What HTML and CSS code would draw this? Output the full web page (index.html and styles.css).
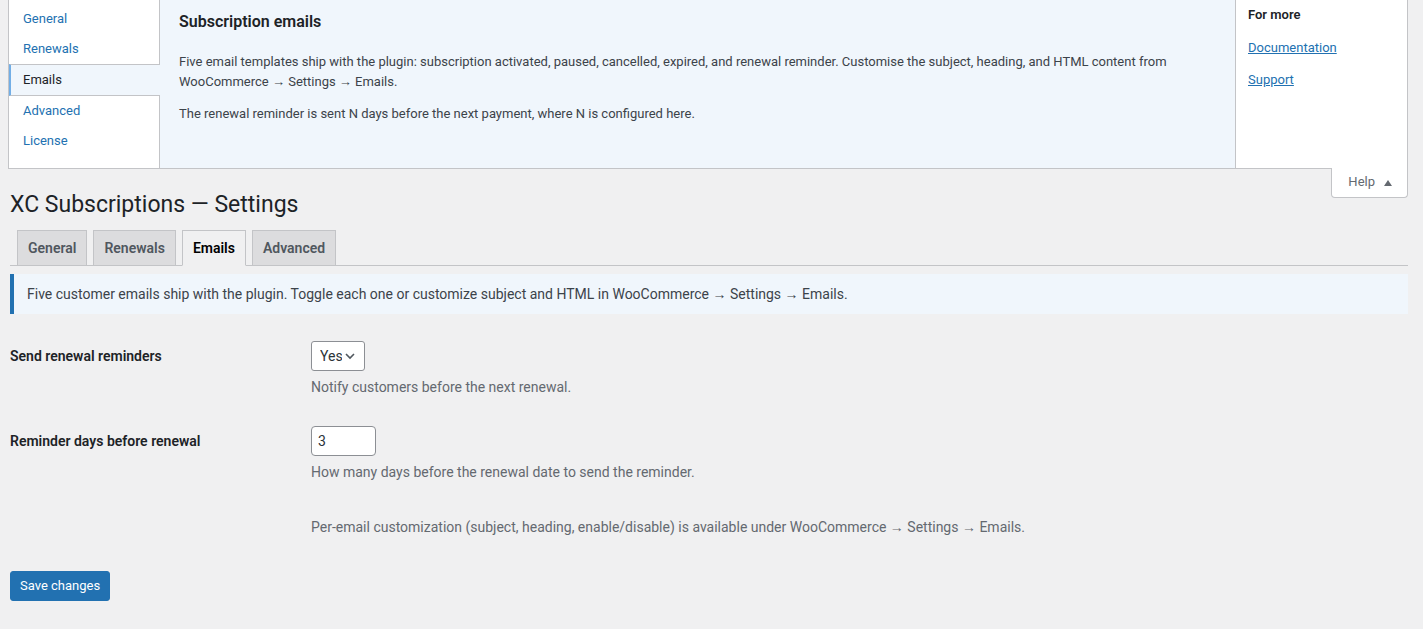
FILE: index.html
```html
<!DOCTYPE html>
<html lang="en">
<head>
  <meta charset="UTF-8">
  <meta name="viewport" content="width=device-width, initial-scale=1.0">
  <title>XC Subscriptions — Settings</title>
  <link rel="stylesheet" href="styles.css">
</head>
<body>
  <div id="screen-meta">
    <div class="help-panel">
      <ul class="help-tabs">
        <li><a href="#">General</a></li>
        <li><a href="#">Renewals</a></li>
        <li class="active"><a href="#">Emails</a></li>
        <li><a href="#">Advanced</a></li>
        <li><a href="#">License</a></li>
      </ul>
      <div class="help-content">
        <h2>Subscription emails</h2>
        <p>Five email templates ship with the plugin: subscription activated, paused, cancelled, expired, and renewal reminder. Customise the subject, heading, and HTML content from WooCommerce → Settings → Emails.</p>
        <p>The renewal reminder is sent N days before the next payment, where N is configured here.</p>
      </div>
      <div class="help-sidebar">
        <p><strong>For more</strong></p>
        <p><a href="#">Documentation</a></p>
        <p><a href="#">Support</a></p>
      </div>
    </div>
  </div>
  <div id="screen-meta-links">
    <button type="button" class="show-settings">Help
      <svg width="10" height="10" viewBox="0 0 10 10"><path d="M1 8 L5 2 L9 8 Z" fill="#646970"/></svg>
    </button>
  </div>

  <div class="wrap">
    <h1>XC Subscriptions — Settings</h1>

    <nav class="nav-tab-wrapper">
      <a href="#" class="nav-tab">General</a>
      <a href="#" class="nav-tab">Renewals</a>
      <a href="#" class="nav-tab nav-tab-active">Emails</a>
      <a href="#" class="nav-tab">Advanced</a>
    </nav>

    <div class="notice notice-info">
      <p>Five customer emails ship with the plugin. Toggle each one or customize subject and HTML in WooCommerce → Settings → Emails.</p>
    </div>

    <form>
      <table class="form-table">
        <tr>
          <th scope="row"><label for="send_reminders">Send renewal reminders</label></th>
          <td>
            <span class="select-wrap">
              <select id="send_reminders">
                <option>Yes</option>
                <option>No</option>
              </select>
              <svg class="chevron" width="12" height="12" viewBox="0 0 12 12"><path d="M2 4 L6 8 L10 4" fill="none" stroke="#50575e" stroke-width="1.6"/></svg>
            </span>
            <p class="description">Notify customers before the next renewal.</p>
          </td>
        </tr>
        <tr>
          <th scope="row"><label for="reminder_days">Reminder days before renewal</label></th>
          <td>
            <input type="text" id="reminder_days" class="small-text" value="3">
            <p class="description">How many days before the renewal date to send the reminder.</p>
          </td>
        </tr>
        <tr>
          <th scope="row"></th>
          <td>
            <p class="description">Per-email customization (subject, heading, enable/disable) is available under WooCommerce → Settings → Emails.</p>
          </td>
        </tr>
      </table>

      <p class="submit">
        <button type="submit" class="button-primary">Save changes</button>
      </p>
    </form>
  </div>
</body>
</html>
```

FILE: styles.css
```css
* {
  box-sizing: border-box;
}
body {
  margin: 0;
  background: #f0f0f1;
  color: #3c434a;
  font-family: Roboto, "Noto Sans", sans-serif;
  font-size: 13px;
  line-height: 1.5;
}
a {
  color: #2271b1;
}

/* help panel */
#screen-meta {
  margin: 0 15px 0 8px;
}
.help-panel {
  display: grid;
  grid-template-columns: 151px 1fr 172px;
  height: 169px;
  background: #fff;
  border: 1px solid #c3c4c7;
  border-top: none;
}
.help-tabs {
  list-style: none;
  margin: 0;
  padding: 5px 0 0;
  border-right: 1px solid #c3c4c7;
}
.help-tabs li a {
  display: block;
  padding: 6px 5px 6px 14px;
  line-height: 18px;
  text-decoration: none;
}
.help-tabs li:first-child a {
  padding-top: 5px;
}
.help-tabs li.active {
  margin-right: -1px;
  position: relative;
  background: #f0f6fc;
  border-left: 2px solid #72aee6;
  border-top: 1px solid #c3c4c7;
  border-bottom: 1px solid #c3c4c7;
}
.help-tabs li.active a {
  color: #1d2327;
  padding-left: 12px;
}
.help-content {
  background: #f0f6fc;
  padding: 11px 20px 0 19px;
}
.help-content h2 {
  margin: 0 0 19px;
  font-size: 16px;
  line-height: 22px;
  font-weight: 600;
  color: #1d2327;
}
.help-content p {
  margin: 0 0 13px;
  line-height: 19.5px;
}
.help-sidebar {
  border-left: 1px solid #c3c4c7;
  padding: 5px 12px 0;
}
.help-sidebar p {
  margin: 0 0 13px;
  line-height: 19.5px;
}
.help-sidebar strong {
  font-weight: 600;
  color: #1d2327;
}

#screen-meta-links {
  float: right;
  margin: -1px 15px 0 0;
  position: relative;
}
.show-settings {
  display: flex;
  align-items: center;
  gap: 8px;
  height: 30px;
  padding: 3px 14px 3px 16px;
  background: #fff;
  border: 1px solid #c3c4c7;
  border-top: none;
  border-radius: 0 0 4px 4px;
  color: #646970;
  font: inherit;
  line-height: 1.7;
}

/* page */
.wrap {
  margin: 10px 15px 0 10px;
}
.wrap h1 {
  margin: 0;
  padding: 11px 0 2px;
  font-size: 23px;
  font-weight: 400;
  line-height: 1.3;
  color: #1d2327;
}
.nav-tab-wrapper {
  display: flex;
  gap: 6px;
  padding: 8px 0 0 7px;
  border-bottom: 1px solid #c3c4c7;
}
.nav-tab {
  margin-bottom: -1px;
  padding: 5px 10px;
  background: #dcdcde;
  border: 1px solid #c3c4c7;
  color: #50575e;
  font-size: 14px;
  font-weight: 600;
  line-height: 24px;
  text-decoration: none;
}
.nav-tab-active {
  background: #f0f0f1;
  border-bottom-color: #f0f0f1;
  color: #000;
}

.notice {
  margin: 8px 0 12px;
  padding: 10px 12px 10px 13px;
  background: #f0f6fc;
  border-left: 4px solid #2271b1;
}
.notice p {
  margin: 0;
  font-size: 14px;
  line-height: 20px;
}

.form-table {
  border-collapse: collapse;
  width: 100%;
  font-size: 14px;
}
.form-table th {
  width: 291px;
  padding: 21px 10px 20px 0;
  text-align: left;
  vertical-align: top;
  font-weight: 600;
  line-height: 1.3;
  color: #1d2327;
}
.form-table td {
  padding: 15px 10px 13px;
  vertical-align: top;
  line-height: 1.3;
}
.form-table p.description {
  margin: 6px 0 0;
  color: #646970;
  line-height: 21px;
}

.select-wrap {
  position: relative;
  display: inline-block;
}
.select-wrap select {
  appearance: none;
  height: 30px;
  width: 54px;
  padding: 0 22px 0 8px;
  border: 1px solid #8c8f94;
  border-radius: 3px;
  background: #fff;
  color: #2c3338;
  font: inherit;
  font-size: 14px;
}
.select-wrap .chevron {
  position: absolute;
  right: 9px;
  top: 9px;
  pointer-events: none;
}
.small-text {
  display: block;
  width: 65px;
  height: 30px;
  padding: 0 6px;
  border: 1px solid #8c8f94;
  border-radius: 4px;
  background: #fff;
  color: #2c3338;
  font: inherit;
  font-size: 14px;
}

.submit {
  margin: 20px 0 0;
}
.button-primary {
  height: 30px;
  padding: 0 9px;
  background: #2271b1;
  border: 1px solid #2271b1;
  border-radius: 3px;
  color: #fff;
  font: inherit;
  font-size: 13px;
  line-height: 28px;
}
```
